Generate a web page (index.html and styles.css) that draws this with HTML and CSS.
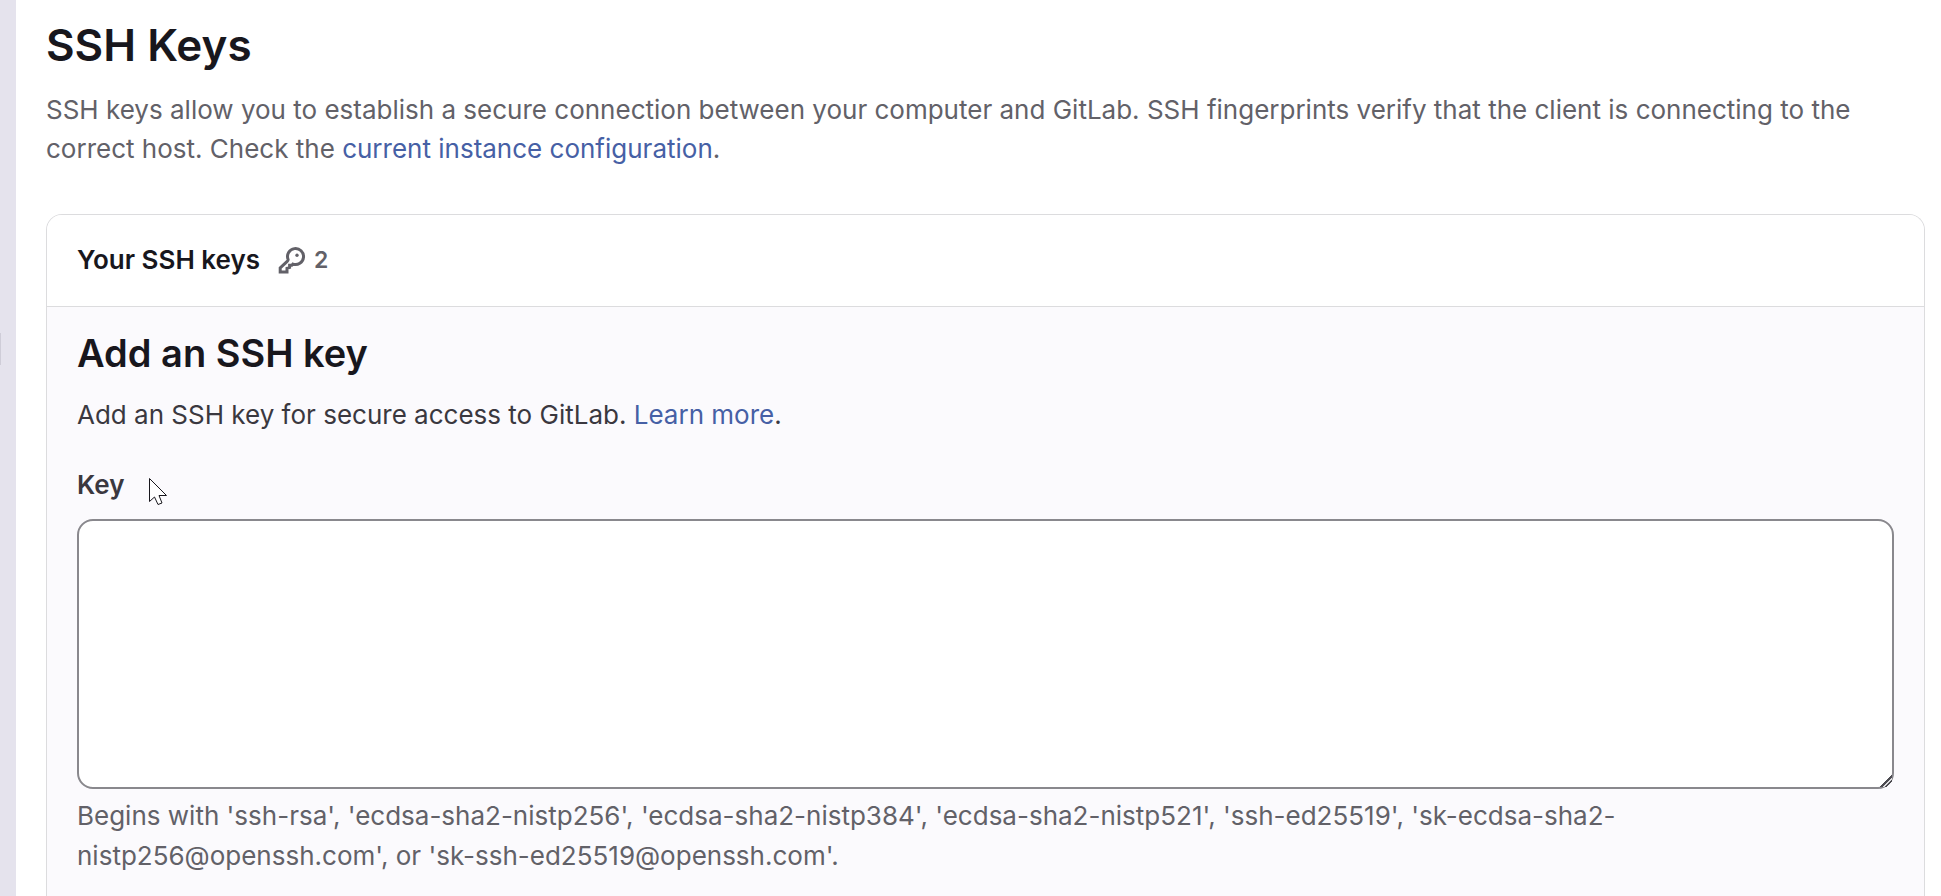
FILE: index.html
```
<!DOCTYPE html>
<html lang="en">
<head>
    <meta charset="UTF-8">
    <meta name="viewport" content="width=device-width, initial-scale=1.0">
    <title>SSH Keys</title>
    <link rel="stylesheet" href="styles.css">
</head>
<body>
    <div class="page">
        <aside class="sidebar">
            <div class="sidebar-handle"></div>
        </aside>

        <main class="content">
            <h1>SSH Keys</h1>
            <p class="description">
                SSH keys allow you to establish a secure connection between your computer and GitLab. SSH fingerprints verify that the client is connecting to the correct host. Check the <a href="#">current instance configuration</a>.
            </p>

            <section class="card">
                <header class="card-header">
                    <h2>Your SSH keys</h2>
                    <span class="count">
                        <svg class="key-icon" viewBox="0 0 28 28" aria-hidden="true">
                            <path d="M10.1 13.5 A8 8 0 1 1 14.9 18.1 L13.8 19.2 H11.6 V21.4 L9 22.4 V26 H2.2 V22 L9.2 15.4 Q10.3 14.4 10.1 13.5 Z"/>
                            <circle cx="19" cy="9.2" r="1.7"/>
                        </svg>
                        2
                    </span>
                </header>

                <form class="key-form">
                    <h3>Add an SSH key</h3>
                    <p>Add an SSH key for secure access to GitLab. <a href="#">Learn more</a>.</p>

                    <label for="key">Key</label>
                    <textarea id="key" name="key"></textarea>
                    <p class="help">
                        Begins with 'ssh-rsa', 'ecdsa-sha2-nistp256', 'ecdsa-sha2-nistp384', 'ecdsa-sha2-nistp521', 'ssh-ed25519', 'sk-ecdsa-sha2-nistp256@openssh.com', or 'sk-ssh-ed25519@openssh.com'.
                    </p>
                </form>
            </section>
        </main>
    </div>

    <svg class="cursor" viewBox="0 0 20 30" aria-hidden="true">
        <path d="M1.5 1.5 V24.5 L6.5 20 L10 27.5 L14 26 L11 18.5 H18.5 Z"/>
    </svg>
</body>
</html>
```
FILE: styles.css
```
body, html {
    margin: 0;
    padding: 0;
    height: 100%;
}

body {
    position: relative;
    overflow: hidden;
    font-family: Inter, "Liberation Sans", sans-serif;
    font-size: 26px;
    line-height: 40px;
    color: #3a383f;
    background-color: #ffffff;
}

h1, h2, h3, p {
    margin: 0;
}

h1, h2, h3 {
    font-weight: 600;
    color: #18171d;
}

a {
    color: #4660a5;
    text-decoration: none;
}

a:hover {
    text-decoration: underline;
}

.page {
    display: flex;
    min-height: 100%;
}

/* Sidebar edge */
.sidebar {
    flex: 0 0 16px;
    background-color: #e5e3ed;
}

.sidebar-handle {
    width: 1px;
    height: 32px;
    margin-top: 333px;
    background-color: #cfcdd8;
}

.content {
    flex: 1;
    min-width: 0;
    display: flex;
    flex-direction: column;
    padding: 17px 16px 0 30px;
}

h1 {
    font-size: 44px;
    line-height: 56px;
}

.description {
    margin-top: 17px;
    line-height: 39px;
    color: #626168;
}

/* Card */
.card {
    flex: 1;
    margin-top: 46px;
    border: 1px solid #dcdcde;
    border-bottom: none;
    border-radius: 16px 16px 0 0;
    background-color: #fbfafd;
    overflow: hidden;
}

.card-header {
    display: flex;
    align-items: center;
    gap: 18px;
    padding: 25px 30px 26px;
    border-bottom: 1px solid #dcdcde;
    background-color: #ffffff;
}

h2 {
    font-size: 26px;
}

.count {
    display: flex;
    align-items: center;
    gap: 8px;
    font-size: 23px;
    font-weight: 600;
    color: #626168;
}

.key-icon {
    width: 28px;
    height: 28px;
    fill: none;
    stroke: #626168;
    stroke-width: 3;
}

.key-icon circle {
    fill: #626168;
    stroke: none;
}

/* Form */
.key-form {
    display: flex;
    flex-direction: column;
    padding: 22px 30px;
}

h3 {
    margin-bottom: 18px;
    font-size: 38px;
    line-height: 48px;
}

.key-form label {
    align-self: flex-start;
    margin: 30px 0 14px;
    font-weight: 600;
}

.key-form textarea {
    box-sizing: border-box;
    width: 100%;
    height: 270px;
    padding: 14px 20px;
    border: 2px solid #89888d;
    border-radius: 16px;
    font: inherit;
    color: inherit;
    background-color: #ffffff;
    resize: vertical;
}

.key-form textarea::-webkit-resizer {
    background: linear-gradient(135deg, transparent 60%, #4c4b51 60%, #4c4b51 67%, #dcdcde 67%, #dcdcde 76%, #4c4b51 76%, #4c4b51 83%, transparent 83%);
}

.key-form .help {
    margin-top: 7px;
    color: #626168;
}

/* Mouse pointer over the form */
.cursor {
    position: absolute;
    top: 477px;
    left: 148px;
    width: 20px;
    height: 30px;
    fill: #ffffff;
    stroke: #18171d;
    stroke-width: 1;
}
```
